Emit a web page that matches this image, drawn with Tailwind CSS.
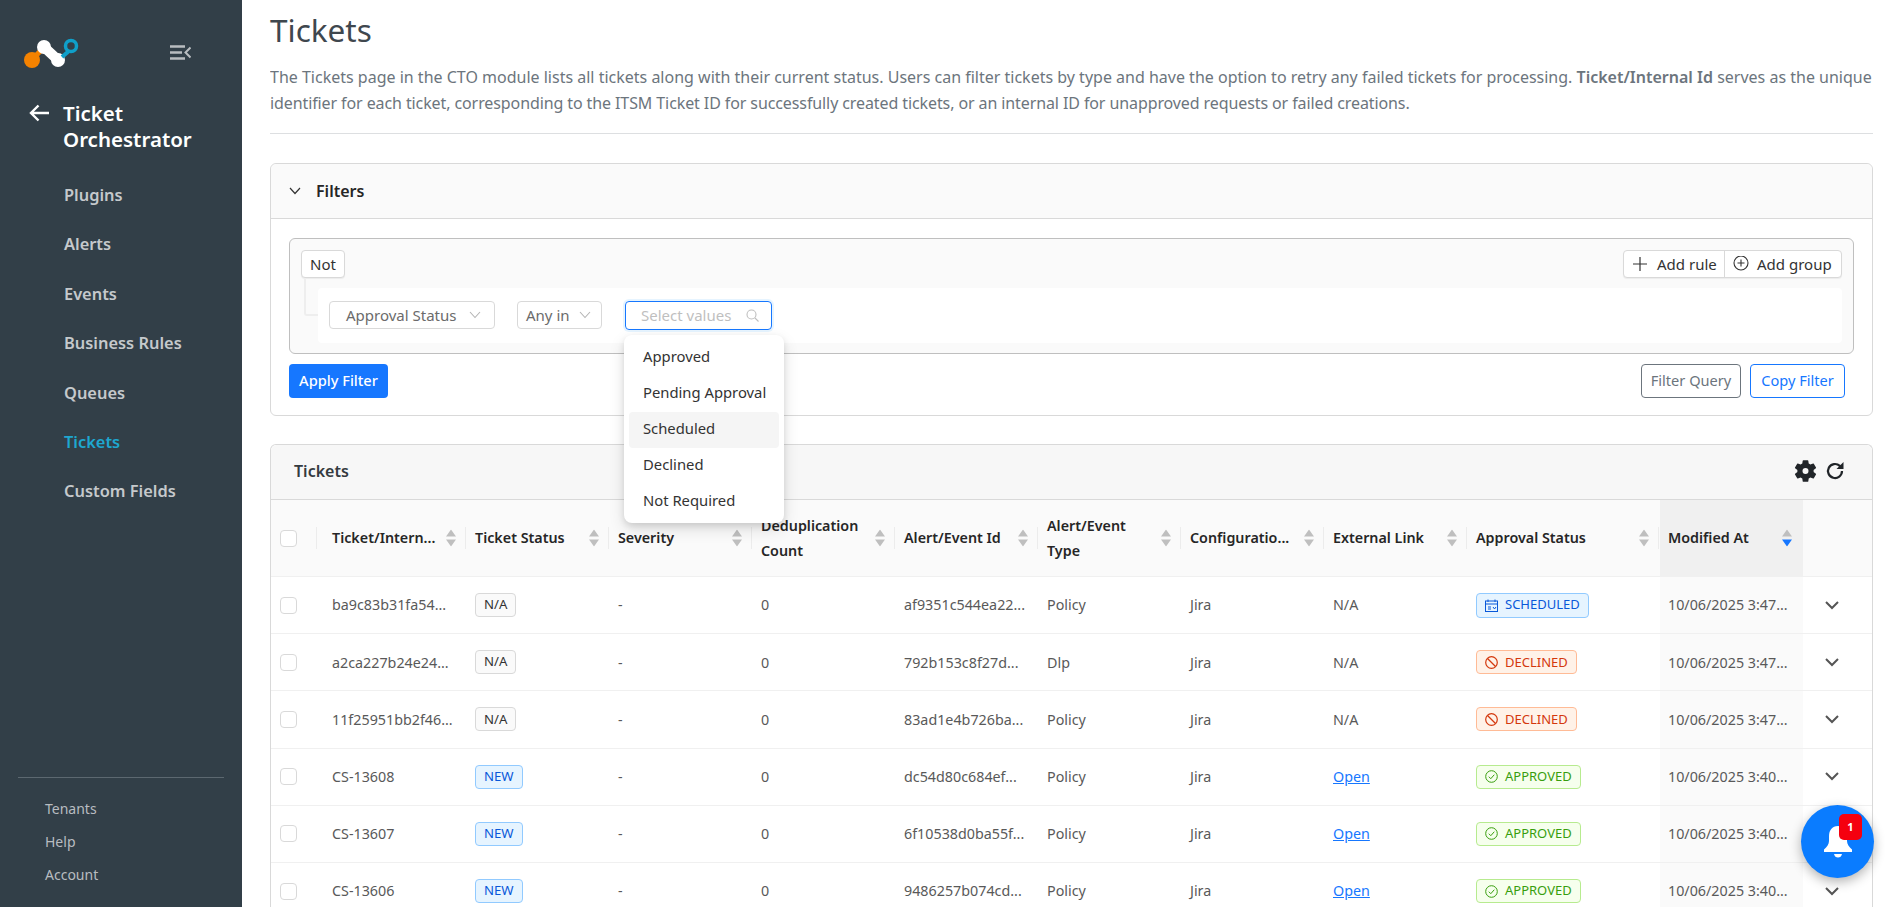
<!DOCTYPE html>
<html lang="en">
<head>
    <meta charset="UTF-8">
    <meta name="viewport" content="width=device-width, initial-scale=1.0">
    <title>Tickets | Ticket Orchestrator</title>
    <script src="https://cdn.jsdelivr.net/npm/@tailwindcss/browser@4"></script>
</head>
<body class="h-screen overflow-hidden bg-white flex font-['Noto_Sans',sans-serif] text-[15px]">

    <!-- Sidebar -->
    <aside class="w-[242px] h-full shrink-0 bg-[#323f48] flex flex-col">
        <div class="h-[94px] flex items-end justify-between pl-[24px] pr-[51px] pb-[26px]">
            <svg width="56" height="30" viewBox="0 0 56 30">
                <path d="M8 22 L20 9" stroke="#f58200" stroke-width="5"/>
                <circle cx="8" cy="22" r="8" fill="#f58200"/>
                <path d="M20 9 L34 22" stroke="#fff" stroke-width="10" stroke-linecap="round"/>
                <circle cx="20" cy="9" r="7" fill="#fff"/>
                <circle cx="34" cy="22" r="7" fill="#fff"/>
                <path d="M38 19 L45 13" stroke="#0f9fc9" stroke-width="4"/>
                <circle cx="47" cy="8" r="5.5" fill="none" stroke="#0f9fc9" stroke-width="3.5"/>
            </svg>
            <svg width="21" height="15" viewBox="0 0 21 15" class="mb-[8px]" fill="none" stroke="#b9bdc0" stroke-width="2.6">
                <path d="M0 1.500h15M0 7.500h12M0 13.500h15"/>
                <path d="M20.500 2.500l-5 5 5 5" stroke-width="2"/>
            </svg>
        </div>
        <div class="flex items-start text-white font-semibold text-[20.5px] leading-[26px] pt-[6px]">
            <svg width="20" height="18" viewBox="0 0 20 18" class="ml-[29px] mt-[4px]" fill="none" stroke="#fff" stroke-width="2.400">
                <path d="M20 9H2M9.500 1.500L2 9l7.500 7.500"/>
            </svg>
            <div class="ml-[14px]">Ticket<br>Orchestrator</div>
        </div>
        <nav class="mt-[18px] flex flex-col text-[16.400px] font-semibold text-[#c5c9cc] leading-[49.400px] pl-[64px]">
            <a>Plugins</a>
            <a>Alerts</a>
            <a>Events</a>
            <a>Business Rules</a>
            <a>Queues</a>
            <a class="text-[#1ea7d0]">Tickets</a>
            <a>Custom Fields</a>
        </nav>
        <div class="mt-auto mx-[18px] border-t border-[#5c6870] pt-[14px] pb-[16px] pl-[27px] text-[14px] text-[#b8bcc0] leading-[33px]">
            <div>Tenants</div>
            <div>Help</div>
            <div>Account</div>
        </div>
    </aside>

    <!-- Main -->
    <main class="relative flex-1 min-w-0 pl-[28px] pr-[12px] overflow-hidden">
        <h1 class="text-[31.500px] leading-[38px] text-[#3f474e] mt-[11px]">Tickets</h1>
        <p class="mt-[15px] text-[16px] leading-[26px] text-[#6c757d] whitespace-nowrap overflow-hidden">The Tickets page in the CTO module lists all tickets along with their current status. Users can filter tickets by type and have the option to retry any failed tickets for processing. <b class="font-semibold">Ticket/Internal Id</b> serves as the unique<br><span class="tracking-[-0.1px]">identifier for each ticket, corresponding to the ITSM Ticket ID for successfully created tickets, or an internal ID for unapproved requests or failed creations.</span></p>
        <hr class="mt-[17px] border-[#dddfe1]">

        <!-- Filters -->
        <section class="mt-[29px] h-[253px] border border-[#d9d9d9] rounded-[6px]">
            <div class="h-[55px] bg-[#fafafa] border-b border-[#d9d9d9] rounded-t-[6px] flex items-center pl-[18px] gap-[15px] text-[16px] font-semibold text-[#262626]">
                <svg width="12" height="8" viewBox="0 0 12 8" fill="none" stroke="#333" stroke-width="1.200"><path d="M1 1l5 5.500L11 1"/></svg>
                Filters
            </div>
            <div class="relative px-[18px] pt-[19px]">
                <div class="relative h-[116px] border border-[#bfbfbf] rounded-[6px] bg-[#fafafa]">
                    <div class="absolute left-[11px] top-[11px] h-[28px] w-[44px] bg-white border border-[#d9d9d9] rounded-[4px] shadow-[0_1px_1px_rgba(0,0,0,0.06)] flex items-center justify-center text-[#333]">Not</div>
                    <div class="absolute right-[11px] top-[11px] h-[28px] flex bg-white border border-[#d9d9d9] rounded-[4px] text-[#333] shadow-[0_1px_1px_rgba(0,0,0,0.06)]">
                        <div class="w-[100px] flex items-center gap-[10px] pl-[9px]">
                            <svg width="14" height="14" viewBox="0 0 14 14" stroke="#333" stroke-width="1.200"><path d="M7 0v14M0 7h14"/></svg>
                            Add rule
                        </div>
                        <div class="w-[117px] border-l border-[#d9d9d9] flex items-center gap-[8px] pl-[8px]">
                            <svg width="16" height="16" viewBox="0 0 16 16" fill="none" stroke="#333" stroke-width="1.100"><circle cx="8" cy="7" r="7"/><path d="M8 3.500v7M4.500 7h7"/></svg>
                            Add group
                        </div>
                    </div>
                    <div class="absolute left-[14px] top-[39px] w-[14px] h-[38px] border-l-2 border-b-2 border-[#eeeeee] rounded-bl-[3px]"></div>
                    <div class="absolute left-[28px] right-[11px] top-[49px] h-[55px] bg-white rounded-[4px] flex items-start pt-[13px] pl-[11px] text-[#6b6b6b]">
                        <div class="w-[166px] h-[28px] border border-[#d9d9d9] rounded-[4px] flex items-center justify-between pl-[16px] pr-[13px]">Approval Status
                            <svg width="12" height="8" viewBox="0 0 12 8" fill="none" stroke="#b5b5b5" stroke-width="1.100"><path d="M1 1l5 5.500L11 1"/></svg>
                        </div>
                        <div class="ml-[22px] w-[85px] h-[28px] border border-[#d9d9d9] rounded-[4px] flex items-center justify-between pl-[8px] pr-[10px]">Any in
                            <svg width="12" height="8" viewBox="0 0 12 8" fill="none" stroke="#b5b5b5" stroke-width="1.100"><path d="M1 1l5 5.500L11 1"/></svg>
                        </div>
                        <div class="ml-[23px] w-[147px] h-[29px] border border-[#1677ff] rounded-[4px] shadow-[0_0_0_2px_rgba(5,145,255,0.1)] flex items-center justify-between pl-[15px] pr-[12px] text-[#bfbfbf]">Select values
                            <svg width="13" height="13" viewBox="0 0 13 13" fill="none" stroke="#bfbfbf" stroke-width="1.100"><circle cx="5.500" cy="5.500" r="4.500"/><path d="M9 9l3.500 3.500"/></svg>
                        </div>
                    </div>
                </div>
                <div class="mt-[10px] flex items-start justify-between pr-[9px] text-[14.600px]">
                    <button class="h-[34px] w-[99px] bg-[#1677ff] text-white rounded-[4px] font-medium">Apply Filter</button>
                    <div class="flex gap-[9px]">
                        <button class="h-[34px] w-[100px] border border-[#6c757d] text-[#6c757d] rounded-[4px]">Filter Query</button>
                        <button class="h-[34px] w-[95px] border border-[#1677ff] text-[#1677ff] rounded-[4px]">Copy Filter</button>
                    </div>
                </div>
            </div>
        </section>

        <!-- Tickets table -->
        <section class="mt-[28px] border border-[#d9d9d9] border-b-0 rounded-t-[6px]">
            <div class="h-[55px] bg-[#f7f7f7] border-b border-[#d9d9d9] rounded-t-[6px] flex items-center justify-between pl-[23px] pr-[27px] pb-[2px] text-[16px] font-semibold text-[#343a40]">
                Tickets
                <div class="flex items-center gap-[8px]">
                    <svg width="23" height="24" viewBox="0 0 22.600 24" fill="#212529"><path d="M19.400 13a7.500 7.500 0 0 0 0-2l2.300-1.800a.6.6 0 0 0 .1-.7l-2.200-3.800a.6.6 0 0 0-.7-.2l-2.700 1.100a8 8 0 0 0-1.700-1L14.100 1.700a.6.6 0 0 0-.6-.5H9.100a.6.6 0 0 0-.6.5L8.100 4.600a8 8 0 0 0-1.700 1L3.700 4.500a.6.6 0 0 0-.7.2L.8 8.500a.6.6 0 0 0 .1.7L3.200 11a7.500 7.500 0 0 0 0 2L.9 14.800a.6.6 0 0 0-.1.7l2.200 3.800a.6.6 0 0 0 .7.2l2.700-1.100a8 8 0 0 0 1.700 1l.4 2.900a.6.6 0 0 0 .6.5h4.400a.6.6 0 0 0 .6-.5l.4-2.900a8 8 0 0 0 1.700-1l2.700 1.100a.6.6 0 0 0 .7-.2l2.200-3.800a.6.6 0 0 0-.1-.7zM11.300 15a3 3 0 1 1 0-6 3 3 0 0 1 0 6z"/></svg>
                    <svg width="20" height="20" viewBox="0 0 20 20" fill="none" stroke="#212529" stroke-width="2.200"><path d="M17 10a7 7 0 1 1-2.200-5.100L17 7"/><path d="M18.500 1V8H11.500" fill="#212529" stroke="none"/></svg>
                </div>
            </div>
            <div id="ticket-grid" class="grid grid-cols-[53px_repeat(8,143px)_192px_143px_1fr] text-[14.300px] text-[#595959]"></div>
        </section>

        <!-- Value dropdown -->
        <div class="absolute left-[382px] top-[335px] w-[160px] h-[188px] bg-white rounded-[8px] shadow-[0_6px_16px_rgba(0,0,0,0.12),0_3px_6px_rgba(0,0,0,0.1)] p-[5px] text-[14.800px] text-[#333] z-10">
            <div class="h-[36px] flex items-center pl-[14px] pb-[3px]">Approved</div>
            <div class="h-[36px] flex items-center pl-[14px] pb-[3px]">Pending Approval</div>
            <div class="h-[36px] flex items-center pl-[14px] pb-[3px] bg-[#f5f5f5] rounded-[4px]">Scheduled</div>
            <div class="h-[36px] flex items-center pl-[14px] pb-[3px]">Declined</div>
            <div class="h-[36px] flex items-center pl-[14px] pb-[3px]">Not Required</div>
        </div>

        <!-- Notifications -->
        <div class="absolute left-[1559px] top-[805px] w-[73px] h-[73px] rounded-full bg-[#0a7cff] shadow-[0_4px_12px_rgba(0,0,0,0.3)] z-20 flex items-center justify-center">
            <svg width="28" height="33" viewBox="0 0 28 33" fill="#fff"><path d="M14 1c-6 0-9 4.500-9 10v5c0 3-2 6-5 8.500V27h28v-2.500c-3-2.500-5-5.500-5-8.500v-5c0-5.500-3-10-9-10z"/><path d="M10 29h8c-.5 2.500-2 3.500-4 3.500s-3.500-1-4-3.500z"/></svg>
            <span class="absolute left-[38px] top-[9px] w-[23px] h-[26px] rounded-[5px] bg-[#f5000f] text-white text-[11px] font-bold flex items-center justify-center">1</span>
        </div>
    </main>

    <script>
        const SORT = (active) => `<svg width="10" height="17" viewBox="0 0 10 17" class="absolute top-1/2 -translate-y-1/2"><path d="M5 0l5 7H0z" fill="#bfbfbf"/><path d="M5 17l5-7H0z" fill="${active ? '#1677ff' : '#bfbfbf'}"/></svg>`;

        const headers = [
            ['Ticket/Intern...', 122],
            ['Ticket Status', 122],
            ['Severity', 122],
            ['Deduplication<br>Count', 122],
            ['Alert/Event Id', 122],
            ['Alert/Event<br>Type', 122],
            ['Configuratio...', 122],
            ['External Link', 122],
            ['Approval Status', 171],
            ['Modified At', 122],
        ];

        const TAGS = {
            'N/A': '<span class="inline-flex items-center h-[24px] px-[8px] rounded-[4px] border border-[#d9d9d9] bg-[#fafafa] text-[#333] text-[13.200px]">N/A</span>',
            'NEW': '<span class="inline-flex items-center h-[24px] px-[8px] rounded-[4px] border border-[#91caff] bg-[#e6f4ff] text-[#0958d9] text-[13.200px]">NEW</span>',
            'SCHEDULED': '<span class="inline-flex items-center gap-[7px] h-[25px] px-[8px] rounded-[4px] border border-[#91caff] bg-[#e6f4ff] text-[#0958d9] text-[13px]"><svg width="13" height="13" viewBox="0 0 13 13" fill="none" stroke="#0958d9"><rect x=".5" y="2" width="12" height="10.500"/><path d="M3 .5V3M10 .5V3M.5 5h12M3 8h3M3 10h3M8 8l1.500 2L11 8"/></svg>SCHEDULED</span>',
            'DECLINED': '<span class="inline-flex items-center gap-[7px] h-[24px] px-[8px] rounded-[4px] border border-[#ffbb96] bg-[#fff2e8] text-[#d4380d] text-[13px]"><svg width="13" height="13" viewBox="0 0 13 13" fill="none" stroke="#d4380d" stroke-width="1.200"><circle cx="6.500" cy="6.500" r="5.800"/><path d="M2.500 2.500l8 8"/></svg>DECLINED</span>',
            'APPROVED': '<span class="inline-flex items-center gap-[7px] h-[24px] px-[8px] rounded-[4px] border border-[#b7eb8f] bg-[#f6ffed] text-[#389e0d] text-[13px]"><svg width="13" height="13" viewBox="0 0 13 13" fill="none" stroke="#389e0d"><circle cx="6.500" cy="6.500" r="5.800"/><path d="M3.800 6.700l2 2 3.500-4"/></svg>APPROVED</span>',
        };

        const rows = [
            ['ba9c83b31fa54...', 'N/A', 'af9351c544ea22...', 'Policy', 'N/A', 'SCHEDULED', '3:47...'],
            ['a2ca227b24e24...', 'N/A', '792b153c8f27d...', 'Dlp', 'N/A', 'DECLINED', '3:47...'],
            ['11f25951bb2f46...', 'N/A', '83ad1e4b726ba...', 'Policy', 'N/A', 'DECLINED', '3:47...'],
            ['CS-13608', 'NEW', 'dc54d80c684ef...', 'Policy', 'Open', 'APPROVED', '3:40...'],
            ['CS-13607', 'NEW', '6f10538d0ba55f...', 'Policy', 'Open', 'APPROVED', '3:40...'],
            ['CS-13606', 'NEW', '9486257b074cd...', 'Policy', 'Open', 'APPROVED', '3:40...'],
        ];

        const CHECK = '<span class="block w-[17px] h-[17px] bg-white border border-[#d9d9d9] rounded-[4px]"></span>';
        const CHEVRON = '<svg width="14" height="9" viewBox="0 0 14 9" fill="none" stroke="#555" stroke-width="2"><path d="M1 1l6 6 6-6"/></svg>';
        const HEAD = 'relative h-[77px] border-b border-[#f0f0f0] flex items-center';
        const SEP = '<span class="absolute left-[-2px] top-[27px] h-[22px] w-px bg-[#ececec]"></span>';
        const CELL = 'h-[57.200px] border-b border-[#f0f0f0] flex items-center whitespace-nowrap overflow-hidden';

        let html = `<div class="${HEAD} bg-[#fafafa] pl-[9px]">${CHECK}<span class="absolute left-[45px] top-[27px] h-[22px] w-px bg-[#ececec]"></span></div>`;
        headers.forEach(([label, sortAt], i) => {
            const sorted = i === headers.length - 1;
            html += `<div class="${HEAD} ${sorted ? 'bg-[#f0f0f0]' : 'bg-[#fafafa]'} pl-[8px] pb-[1px] font-semibold leading-[25px] text-[#262626]">${i ? SEP : ''}<span>${label}</span><span class="absolute top-1/2" style="left:${sortAt}px">${SORT(sorted)}</span></div>`;
        });
        html += `<div class="${HEAD} bg-[#fafafa]"></div>`;

        rows.forEach(([id, status, alertId, type, link, approval, time]) => {
            const linkHtml = link === 'Open' ? '<a class="text-[#1677ff] underline">Open</a>' : link;
            const cells = [id, TAGS[status], '-', '0', alertId, type, 'Jira', linkHtml, TAGS[approval]];
            html += `<div class="${CELL} pl-[9px]">${CHECK}</div>`;
            cells.forEach(c => { html += `<div class="${CELL} pl-[8px]">${c}</div>`; });
            html += `<div class="${CELL} bg-[#fafafa] pl-[8px]">10/06/2025 ${time}</div>`;
            html += `<div class="${CELL} pl-[22px]">${CHEVRON}</div>`;
        });
        document.getElementById('ticket-grid').innerHTML = html;
    </script>
</body>
</html>
